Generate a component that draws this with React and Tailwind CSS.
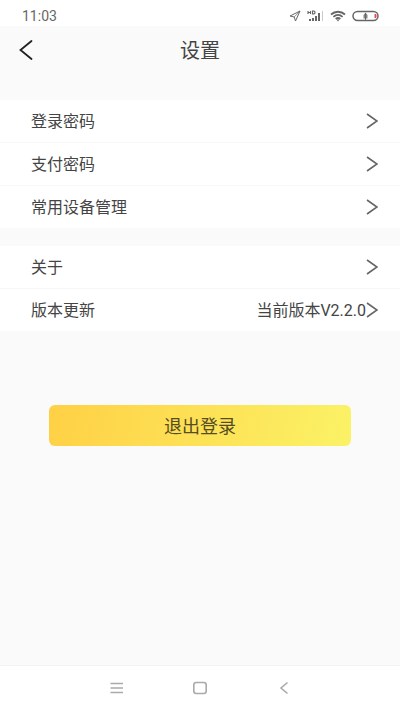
import React from 'react';

const groups = [
  [
    { label: '登录密码' },
    { label: '支付密码' },
    { label: '常用设备管理' },
  ],
  [
    { label: '关于' },
    { label: '版本更新', value: '当前版本V2.2.0' },
  ],
];

function StatusBar() {
  return (
    <div className="flex h-[26px] items-center justify-between bg-white pt-1.5 pl-[22px] pr-5 text-[#666]">
      <span className="text-sm leading-5">11:03</span>
      <div className="flex items-center gap-1.5">
        <svg width="12" height="12" viewBox="0 0 12 12" fill="none" stroke="currentColor" strokeLinejoin="round">
          <path d="M11 1L1 6l4.2 1L6.500 11z" />
          <path d="M11 1L5.200 7" strokeWidth="0.7" />
        </svg>
        <svg width="17" height="12" viewBox="0 0 17 12" fill="currentColor">
          <path d="M1 1v3M3.500 1v3M1 2.500h2.500M5.500 1v3h1.500l1-1V2L7 1z" fill="none" stroke="currentColor" strokeWidth="1.100" />
          <path d="M2 9h2v2H2zM5 8h2v3H5zM8 6h2v5H8zM11 3h2v8h-2z" />
          <path d="M15 1h1v10h-1z" opacity="0.35" />
        </svg>
        <svg width="16" height="12" viewBox="0 0 16 12" fill="none" stroke="currentColor" strokeWidth="1.800">
          <path d="M1 4.500c4-3.700 10-3.700 14 0M3.400 6.800c2.700-2.400 6.500-2.400 9.200 0M5.700 9c1.400-1.200 3.200-1.200 4.600 0" />
          <path d="M6.500 9.500h3L8 11.500z" fill="currentColor" stroke="none" />
        </svg>
        <svg width="28" height="12" viewBox="0 0 28 12" fill="none">
          <rect x="1" y="1.500" width="25" height="9" rx="4.500" stroke="currentColor" strokeWidth="1.500" />
          <path d="M22.500 4H24c.8 1.200.8 2.800 0 4h-1.500z" fill="#f04848" />
          <path d="M13.500 2.500l2 2.500v3.500h-4V5z" fill="currentColor" opacity="0.8" />
          <path d="M13.500 3v7" stroke="currentColor" />
        </svg>
      </div>
    </div>
  );
}

function Row({ label, value }) {
  return (
    <button type="button" className="flex h-[42px] w-full items-center justify-between bg-white pl-[31px] pr-[22px] text-left">
      <span className="pt-0.5">{label}</span>
      <span className="flex items-center">
        {value && <span className="pt-0.5">{value}</span>}
        <svg width="12" height="16" viewBox="0 0 12 16" fill="none" stroke="#666" strokeWidth="1.600">
          <path d="M1 1l10 7-10 7" />
        </svg>
      </span>
    </button>
  );
}

export default function App() {
  return (
    <div className="flex min-h-screen flex-col bg-[#fafafa] font-[Roboto,'Noto_Sans_CJK_SC',sans-serif] text-[#444]">
      <StatusBar />
      <header className="mb-[26px] grid h-12 grid-cols-[1fr_auto_1fr] items-center">
        <button type="button" aria-label="返回" className="justify-self-start pl-[19px]">
          <svg width="14" height="20" viewBox="0 0 14 20" fill="none" stroke="#222" strokeWidth="1.800" strokeLinecap="round">
            <path d="M12.500 1L1.500 10l11 9" />
          </svg>
        </button>
        <h1 className="pt-0.5 text-xl leading-6">设置</h1>
      </header>

      <main className="flex-1">
        <div className="flex flex-col gap-[18px] text-base leading-5">
          {groups.map((rows, i) => (
            <section key={i} className="flex flex-col gap-px bg-[#f7f7f7]">
              {rows.map(row => <Row key={row.label} {...row} />)}
            </section>
          ))}
        </div>

        <div className="mt-[74px] px-[49px]">
          <button type="button" className="h-[41px] w-full rounded-md bg-linear-[105deg] from-[#ffd045] to-[#fbf266] pt-0.5 text-lg leading-6 text-[#564d22]">
            退出登录
          </button>
        </div>
      </main>

      <nav className="flex h-[45px] items-center justify-center gap-[70px] border-t border-[#f3f3f3] bg-white text-[#aaa]">
        <button type="button" aria-label="菜单">
          <svg width="14" height="14" viewBox="0 0 14 14" stroke="currentColor" strokeWidth="1.600">
            <path d="M1.500 2.500h12.500M1.500 7h12.500M1.500 11.500h12.500" />
          </svg>
        </button>
        <button type="button" aria-label="主页">
          <svg width="14" height="14" viewBox="0 0 14 14" fill="none" stroke="currentColor" strokeWidth="1.600">
            <rect x="0.800" y="1.500" width="12.400" height="11" rx="2.500" />
          </svg>
        </button>
        <button type="button" aria-label="后退">
          <svg width="14" height="14" viewBox="0 0 14 14" fill="none" stroke="currentColor" strokeWidth="1.600">
            <path d="M10.500 1.500L4 7l6.500 5.500" />
          </svg>
        </button>
      </nav>
    </div>
  );
}
